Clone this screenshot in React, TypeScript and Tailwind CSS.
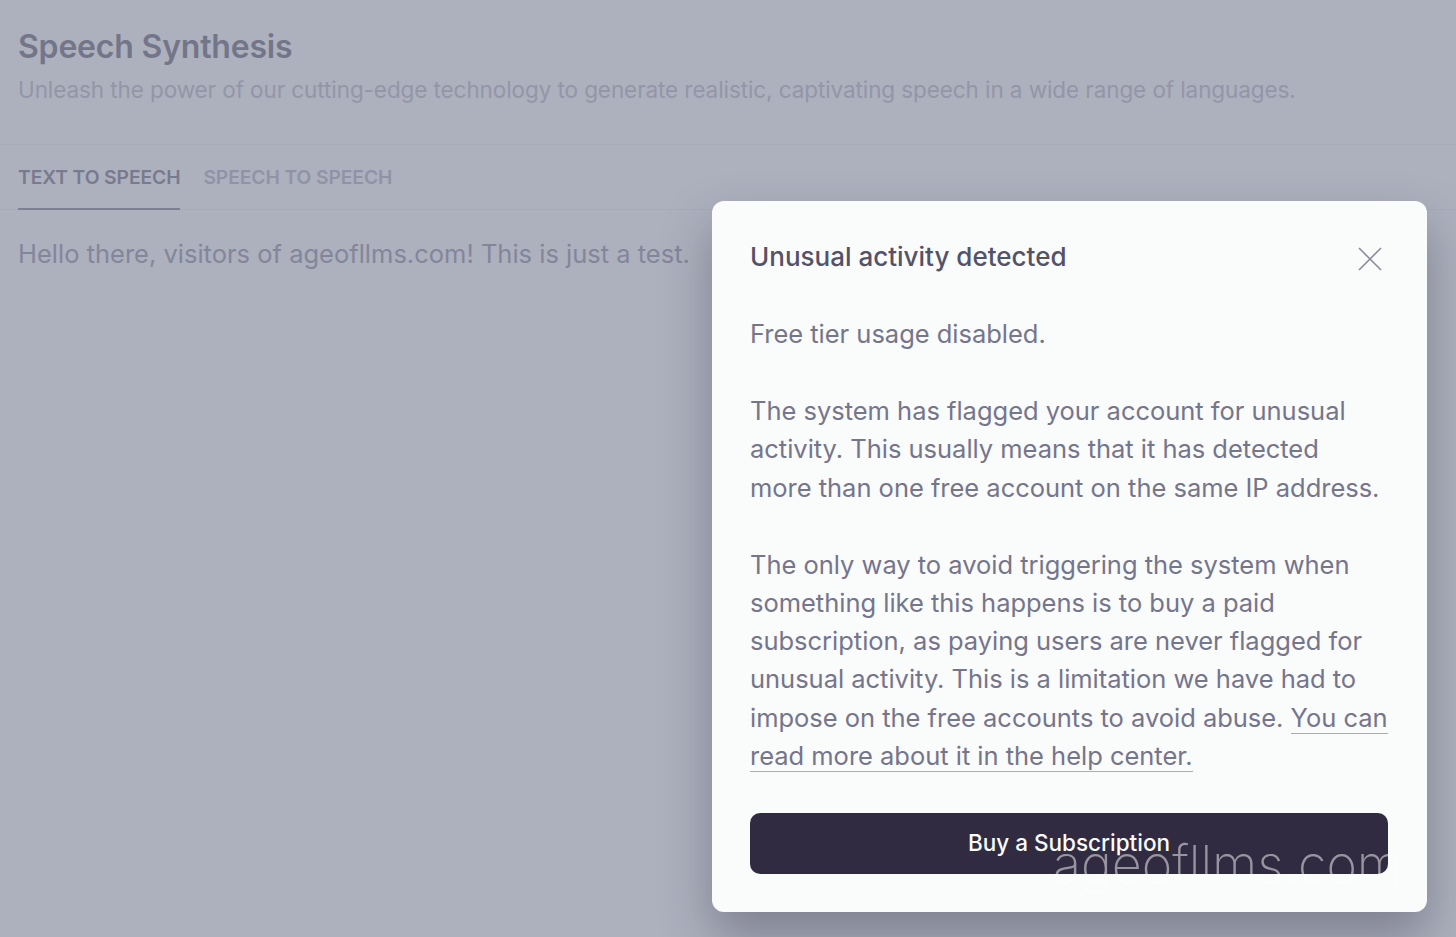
export default function App() {
  return (
    <div className="relative h-[937px] w-[1456px] overflow-hidden bg-[#fafbfb] font-['Inter',sans-serif]">
      <header className="h-[145px] border-b border-[#eceef2] px-[18px] pt-[26px]">
        <h1 className="text-[32px] leading-[42px] font-semibold tracking-[-0.2px] text-[#3a364c]">Speech Synthesis</h1>
        <p className="mt-[3px] text-[22.5px] leading-[38px] tracking-[-0.09px] text-[#a2a5b2]">
          Unleash the power of our cutting-edge technology to generate realistic, captivating speech in a wide range of languages.
        </p>
      </header>

      <nav className="flex h-[65px] gap-[23px] border-b border-[#e8eaef] px-[18px]">
        <button className="-mb-px border-b-2 border-[#5c5a72] pt-[1px] text-[19.3px] font-semibold tracking-[-0.1px] text-[#4a4760]">TEXT TO SPEECH</button>
        <button className="-mb-px border-b-2 border-transparent pt-[1px] text-[19.3px] font-semibold tracking-[-0.1px] text-[#989baa]">SPEECH TO SPEECH</button>
      </nav>

      <p className="px-[18px] pt-[25px] text-[25.5px] leading-[38px] text-[#6f6f85]">
        Hello there, visitors of ageofllms.com! This is just a test.
      </p>

      <div className="absolute inset-0 flex items-end justify-end bg-[#8c90a2]/70 pr-[29px] pb-[25px]">
        <div className="relative flex h-[711px] w-[715px] flex-col rounded-[12px] bg-[#fafbfb] pt-[36px] pr-[39px] pl-[38px] shadow-[0_25px_50px_rgba(40,40,60,0.35)]">
          <div className="flex items-center justify-between">
            <h2 className="text-[26px] leading-[40px] font-medium text-[#545268]">Unusual activity detected</h2>
            <svg viewBox="0 0 24 24" className="mt-[4px] mr-[6px] h-[24px] w-[24px] text-[#8b8ca0]" fill="none" stroke="currentColor" strokeWidth="1.6">
              <path d="M1 1 L23 23 M23 1 L1 23" />
            </svg>
          </div>

          <div className="mt-[38px] -mr-[3px] text-[25.5px] leading-[38.2px] tracking-[-0.02px] text-[#75758b]">
            <p>Free tier usage disabled.</p>
            <p className="mt-[39px] max-w-[632px]">
              The system has flagged your account for unusual activity. This usually means that it has detected more than one free account on the same IP address.
            </p>
            <p className="mt-[39px]">
              The only way to avoid triggering the system when something like this happens is to buy a paid subscription, as paying users are never flagged for unusual activity. This is a limitation we have had to impose on the free accounts to avoid abuse.{' '}
              <a className="border-b border-[#a8abbc]">You can read more about it in the help center.</a>
            </p>
          </div>

          <button className="mt-[38px] h-[61px] w-full rounded-[10px] bg-[#312b42] pb-[2px] text-[22.5px] font-medium text-[#fafbfb]">
            Buy a Subscription
          </button>

          <span className="absolute top-[638px] left-[341px] text-[52px] leading-none font-extralight tracking-[0px] text-white/50">ageofllms.com</span>
        </div>
      </div>
    </div>
  );
}
